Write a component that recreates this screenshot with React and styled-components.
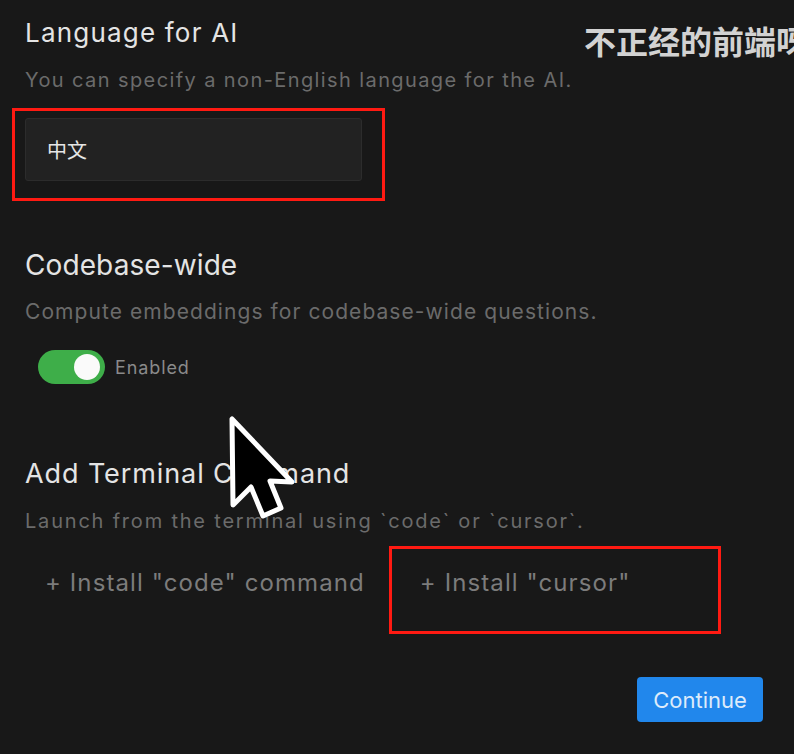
import React from "react";
import styled, { createGlobalStyle } from "styled-components";

const GlobalStyle = createGlobalStyle`
  html, body {
    margin: 0;
    padding: 0;
    background: #181818;
    overflow: hidden;
  }
  body {
    font-family: Inter, "Noto Sans", "Noto Sans CJK SC", sans-serif;
    -webkit-font-smoothing: antialiased;
  }
`;

function Cursor() {
  return (
    <CursorIcon width="70" height="106" viewBox="-4 -4 70 106">
      <path
        d="M0 0 L1 86 L19 68 L31 97 L49 89 L38 62 L60 63 Z"
        fill="#000"
        stroke="#fff"
        strokeWidth="5"
        strokeLinejoin="round"
      />
    </CursorIcon>
  );
}

function App() {
  return (
    <Page>
      <GlobalStyle />
      <Watermark>不正经的前端呀</Watermark>

      <Section>
        <Title size={26} spacing={1.2}>Language for AI</Title>
        <Hint size={20} spacing={1.4} gap={18}>
          You can specify a non-English language for the AI.
        </Hint>
        <InputWrap>
          <TextInput defaultValue="中文" readOnly />
          <Highlight />
        </InputWrap>
      </Section>

      <Section top={68}>
        <Title size={28} spacing={0.1}>Codebase-wide</Title>
        <Hint size={21} spacing={1.07} gap={18}>
          Compute embeddings for codebase-wide questions.
        </Hint>
        <ToggleRow>
          <Switch on>
            <Knob />
          </Switch>
          <ToggleLabel>Enabled</ToggleLabel>
        </ToggleRow>
      </Section>

      <Section top={74}>
        <Title size={27} spacing={0.9}>Add Terminal Command</Title>
        <Hint size={20} spacing={1.8} gap={18}>
          Launch from the terminal using `code` or `cursor`.
        </Hint>
        <CommandRow>
          <CommandButton>+ Install "code" command</CommandButton>
          <CommandButton>
            + Install "cursor"
            <HighlightWide />
          </CommandButton>
        </CommandRow>
      </Section>

      <Footer>
        <ContinueButton>Continue</ContinueButton>
      </Footer>

      <Cursor />
    </Page>
  );
}

const Page = styled.div`
  position: relative;
  width: 794px;
  height: 754px;
  box-sizing: border-box;
  padding: 17px 31px 0 25px;
  color: #e2e2e2;
  overflow: hidden;
`;

const Watermark = styled.div`
  position: absolute;
  left: 584px;
  top: 20px;
  font-family: "Noto Sans CJK SC", sans-serif;
  font-weight: 700;
  font-size: 32px;
  line-height: 40px;
  color: #d2d2d2;
  white-space: nowrap;
`;

const Section = styled.section`
  display: flex;
  flex-direction: column;
  align-items: flex-start;
  margin-top: ${(p) => p.top || 0}px;
`;

const Title = styled.h2`
  margin: 0;
  font-size: ${(p) => p.size}px;
  letter-spacing: ${(p) => p.spacing}px;
  line-height: 32px;
  font-weight: 400;
  color: #e4e4e4;
`;

const Hint = styled.p`
  margin: ${(p) => p.gap}px 0 0;
  font-size: ${(p) => p.size}px;
  letter-spacing: ${(p) => p.spacing}px;
  line-height: 26px;
  color: #6b6b6b;
`;

const InputWrap = styled.div`
  position: relative;
  margin-top: 25px;
`;

const TextInput = styled.input`
  box-sizing: border-box;
  width: 337px;
  height: 63px;
  padding: 0 21px;
  background: #222222;
  border: 1px solid #2c2c2c;
  border-radius: 3px;
  color: #e6e6e6;
  font-family: Inter, "Noto Sans CJK SC", sans-serif;
  font-size: 20px;
  outline: none;
`;

const Highlight = styled.div`
  position: absolute;
  left: -13px;
  top: -10px;
  width: 373px;
  height: 93px;
  box-sizing: border-box;
  border: 3px solid #ff1a12;
  pointer-events: none;
`;

const HighlightWide = styled(Highlight)`
  left: -31px;
  top: -22px;
  width: 332px;
  height: 88px;
`;

const ToggleRow = styled.div`
  display: flex;
  align-items: center;
  gap: 10px;
  margin: 25px 0 0 13px;
`;

const Switch = styled.div`
  width: 67px;
  height: 34px;
  border-radius: 17px;
  background: ${(p) => (p.on ? "#3eae49" : "#444")};
  display: flex;
  align-items: center;
  justify-content: ${(p) => (p.on ? "flex-end" : "flex-start")};
  padding: 0 5px;
  box-sizing: border-box;
`;

const Knob = styled.div`
  width: 26px;
  height: 26px;
  border-radius: 50%;
  background: #fafafa;
`;

const ToggleLabel = styled.span`
  font-size: 18px;
  letter-spacing: 0.9px;
  color: #8a8a8a;
`;

const CommandRow = styled.div`
  display: flex;
  gap: 55px;
  margin: 34px 0 0 20px;
`;

const CommandButton = styled.button`
  position: relative;
  padding: 0;
  background: none;
  border: none;
  font-family: Inter, sans-serif;
  font-size: 24px;
  letter-spacing: 1.1px;
  line-height: 30px;
  color: #7c7c7c;
  cursor: pointer;
`;

const Footer = styled.div`
  display: flex;
  justify-content: flex-end;
  margin-top: 79px;
`;

const ContinueButton = styled.button`
  width: 126px;
  height: 45px;
  border: none;
  border-radius: 4px;
  background: #2187ec;
  color: #dcebfb;
  font-family: Inter, sans-serif;
  font-size: 22px;
`;

const CursorIcon = styled.svg`
  position: absolute;
  left: 228px;
  top: 415px;
`;

export default App;
